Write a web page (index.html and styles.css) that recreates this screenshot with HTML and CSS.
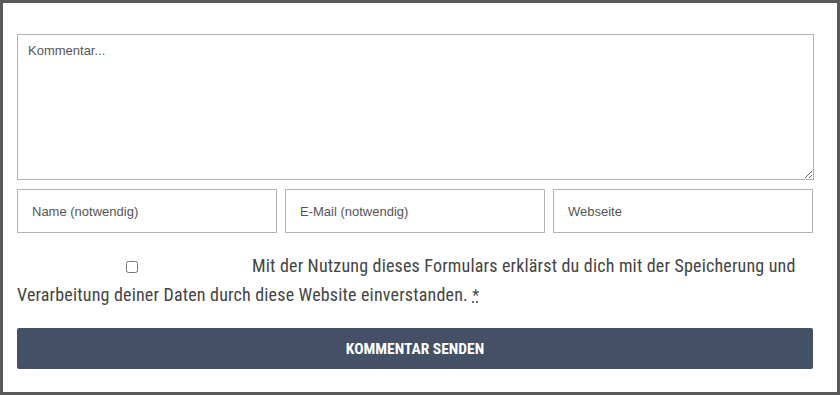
FILE: index.html
```html
<!DOCTYPE html>
<html lang="de">
<head>
<meta charset="utf-8">
<link rel="stylesheet" href="styles.css">
</head>
<body>
<div class="frame">
  <form class="comment-form">
    <textarea class="comment-field" placeholder="Kommentar..."></textarea>
    <div class="fields">
      <input class="field" type="text" placeholder="Name (notwendig)">
      <input class="field" type="text" placeholder="E-Mail (notwendig)">
      <input class="field" type="text" placeholder="Webseite">
    </div>
    <p class="consent"><input class="consent-box" type="checkbox">Mit der Nutzung dieses Formulars erklärst du dich mit der Speicherung und Verarbeitung deiner Daten durch diese Website einverstanden. <abbr class="req" title="required">*</abbr></p>
    <button class="submit" type="button">KOMMENTAR SENDEN</button>
  </form>
</div>
</body>
</html>
```
FILE: styles.css
```css
html, body {
  margin: 0;
  padding: 0;
  background: #5a5a5a;
}
.frame {
  margin: 3px;
  width: 834px;
  height: 389px;
  background: #ffffff;
  box-sizing: border-box;
  padding: 31px 23px 0 14px;
}
.comment-form {
  display: flex;
  flex-direction: column;
}
.comment-field {
  display: block;
  width: 797px;
  height: 146px;
  box-sizing: border-box;
  border: 1px solid #b3b3b3;
  padding: 8px 10px;
  font-family: "Liberation Sans", Arial, sans-serif;
  font-size: 13px;
  color: #555;
  resize: vertical;
  margin: 0;
}
.comment-field::placeholder,
.field::placeholder {
  color: #555;
  opacity: 1;
}
.fields {
  display: flex;
  gap: 8px;
  margin-top: 9px;
  width: 796px;
}
.field {
  flex: 1;
  min-width: 0;
  height: 44px;
  box-sizing: border-box;
  border: 1px solid #b3b3b3;
  padding: 0 14px;
  font-family: "Liberation Sans", Arial, sans-serif;
  font-size: 13px;
  color: #555;
  margin: 0;
}
.consent {
  margin: 18px 0 0 0;
  font-family: "Liberation Sans Narrow", "Roboto Condensed", Roboto, sans-serif;
  font-size: 18px;
  letter-spacing: 0.18px;
  line-height: 29px;
  color: #444;
  width: 800px;
}
.consent-box {
  margin: 0 114px 0 109px;
  width: 12px;
  height: 12px;
  vertical-align: -1px;
}
.req {
  text-decoration: underline dotted;
  font-size: 16px;
}
.submit {
  margin-top: 18px;
  width: 796px;
  height: 41px;
  border: 0;
  border-radius: 2px;
  background: #435066;
  color: #fff;
  font-family: "Liberation Sans Narrow", "Roboto Condensed", Roboto, sans-serif;
  font-weight: bold;
  font-size: 15.5px;
  cursor: pointer;
}
```
